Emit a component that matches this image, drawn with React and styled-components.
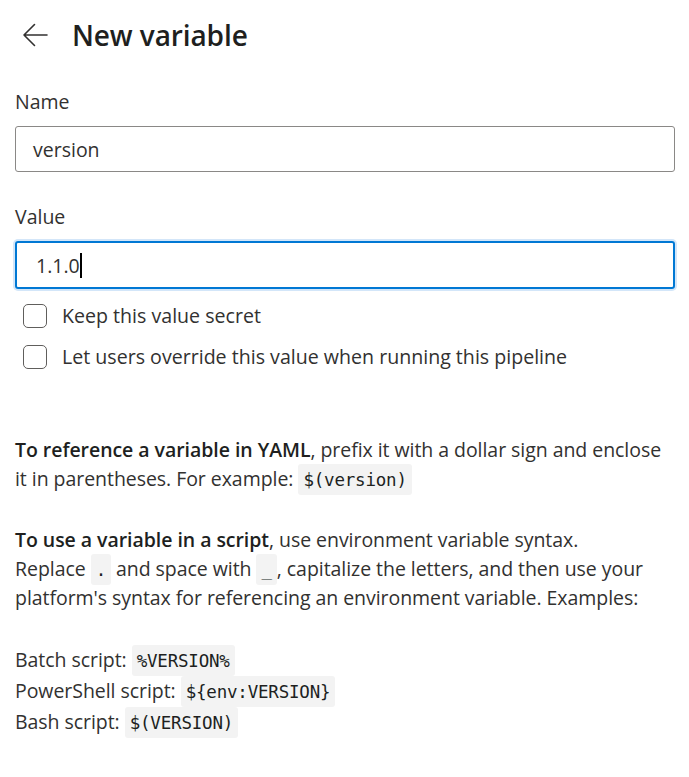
import React from "react";
import styled, { createGlobalStyle } from "styled-components";

const Global = createGlobalStyle`
  html, body { margin: 0; padding: 0; background: #ffffff; }
  body { font-family: "Segoe UI", "Open Sans", "Noto Sans", sans-serif; color: #323130; }
  * { box-sizing: border-box; }
`;

const Page = styled.div`
  width: 689px;
  padding: 12px 14px 30px 15px;
`;

const Header = styled.div`
  display: flex;
  align-items: center;
  gap: 24px;
  height: 46px;
  padding-left: 7px;
`;

const BackButton = styled.button`
  display: flex;
  align-items: center;
  justify-content: center;
  width: 26px;
  height: 28px;
  padding: 0;
  border: none;
  background: none;
  cursor: pointer;
`;

const Title = styled.h1`
  margin: 0;
  font-size: 28px;
  font-weight: 600;
  color: #201f1e;
  letter-spacing: -0.1px;
`;

const Field = styled.div`
  display: flex;
  flex-direction: column;
  margin-top: ${(p) => p.$top || 0}px;
`;

const Label = styled.label`
  font-size: 19.5px;
  line-height: 24px;
  color: #323130;
  margin-bottom: 12px;
`;

const Input = styled.div`
  height: ${(p) => (p.$focused ? 48 : 46)}px;
  border: ${(p) => (p.$focused ? "2px solid #0078d4" : "1px solid #8a8886")};
  border-radius: 3px;
  box-shadow: ${(p) => (p.$focused ? "0 0 0 2px #d3e6f9" : "none")};
  display: flex;
  align-items: center;
  padding-left: ${(p) => (p.$focused ? 19 : 17)}px;
  font-size: 19.5px;
  color: #323130;
`;

const Caret = styled.span`
  display: inline-block;
  width: 2px;
  height: 25px;
  background: #000;
`;

const Checks = styled.div`
  display: flex;
  flex-direction: column;
  gap: 17px;
  margin-top: 15px;
  padding-left: 8px;
`;

const CheckRow = styled.label`
  display: flex;
  align-items: center;
  gap: 15px;
  font-size: 19.6px;
  color: #323130;
  line-height: 24px;
`;

const Box = styled.span`
  width: 24px;
  height: 24px;
  border: 1px solid #605e5c;
  border-radius: 5px;
  background: #fff;
  flex: none;
`;

const Help = styled.div`
  margin-top: 66px;
  font-size: 19.5px;
  line-height: 29px;
  color: #323130;
  letter-spacing: -0.05px;
`;

const Para = styled.p`
  margin: 0 0 32px 0;
`;

const Strong = styled.strong`
  font-weight: 600;
  color: #201f1e;
`;

const Code = styled.code`
  font-family: "DejaVu Sans Mono", "Liberation Mono", monospace;
  font-size: 17.5px;
  line-height: 1;
  letter-spacing: -0.2px;
  background: #f3f3f3;
  border-radius: 3px;
  padding: 6px 5px 5px;
  color: #201f1e;
`;

const Examples = styled.div`
  display: flex;
  flex-direction: column;
  line-height: 31px;
`;

function ArrowLeft() {
  return (
    <svg width="26" height="24" viewBox="0 0 26 24" fill="none">
      <path d="M25 12H2M12.5 1.5L2 12l10.5 10.5" stroke="#323130" strokeWidth="1.6" strokeLinecap="round" strokeLinejoin="round" />
    </svg>
  );
}

export default function App() {
  return (
    <>
      <Global />
      <Page>
        <Header>
          <BackButton aria-label="Back">
            <ArrowLeft />
          </BackButton>
          <Title>New variable</Title>
        </Header>

        <Field $top={32}>
          <Label>Name</Label>
          <Input>version</Input>
        </Field>

        <Field $top={33}>
          <Label>Value</Label>
          <Input $focused>
            1.1.0<Caret />
          </Input>
        </Field>

        <Checks>
          <CheckRow>
            <Box />
            Keep this value secret
          </CheckRow>
          <CheckRow>
            <Box />
            Let users override this value when running this pipeline
          </CheckRow>
        </Checks>

        <Help>
          <Para>
            <Strong>To reference a variable in YAML</Strong>, prefix it with a dollar sign and enclose
            <br />
            it in parentheses. For example: <Code>$(version)</Code>
          </Para>
          <Para>
            <Strong>To use a variable in a script</Strong>, use environment variable syntax.
            <br />
            Replace <Code>.</Code> and space with <Code>_</Code>, capitalize the letters, and then use your
            platform's syntax for referencing an environment variable. Examples:
          </Para>
          <Examples>
            <div>
              Batch script: <Code>%VERSION%</Code>
            </div>
            <div>
              PowerShell script: <Code>${"{env:VERSION}"}</Code>
            </div>
            <div>
              Bash script: <Code>$(VERSION)</Code>
            </div>
          </Examples>
        </Help>
      </Page>
    </>
  );
}
